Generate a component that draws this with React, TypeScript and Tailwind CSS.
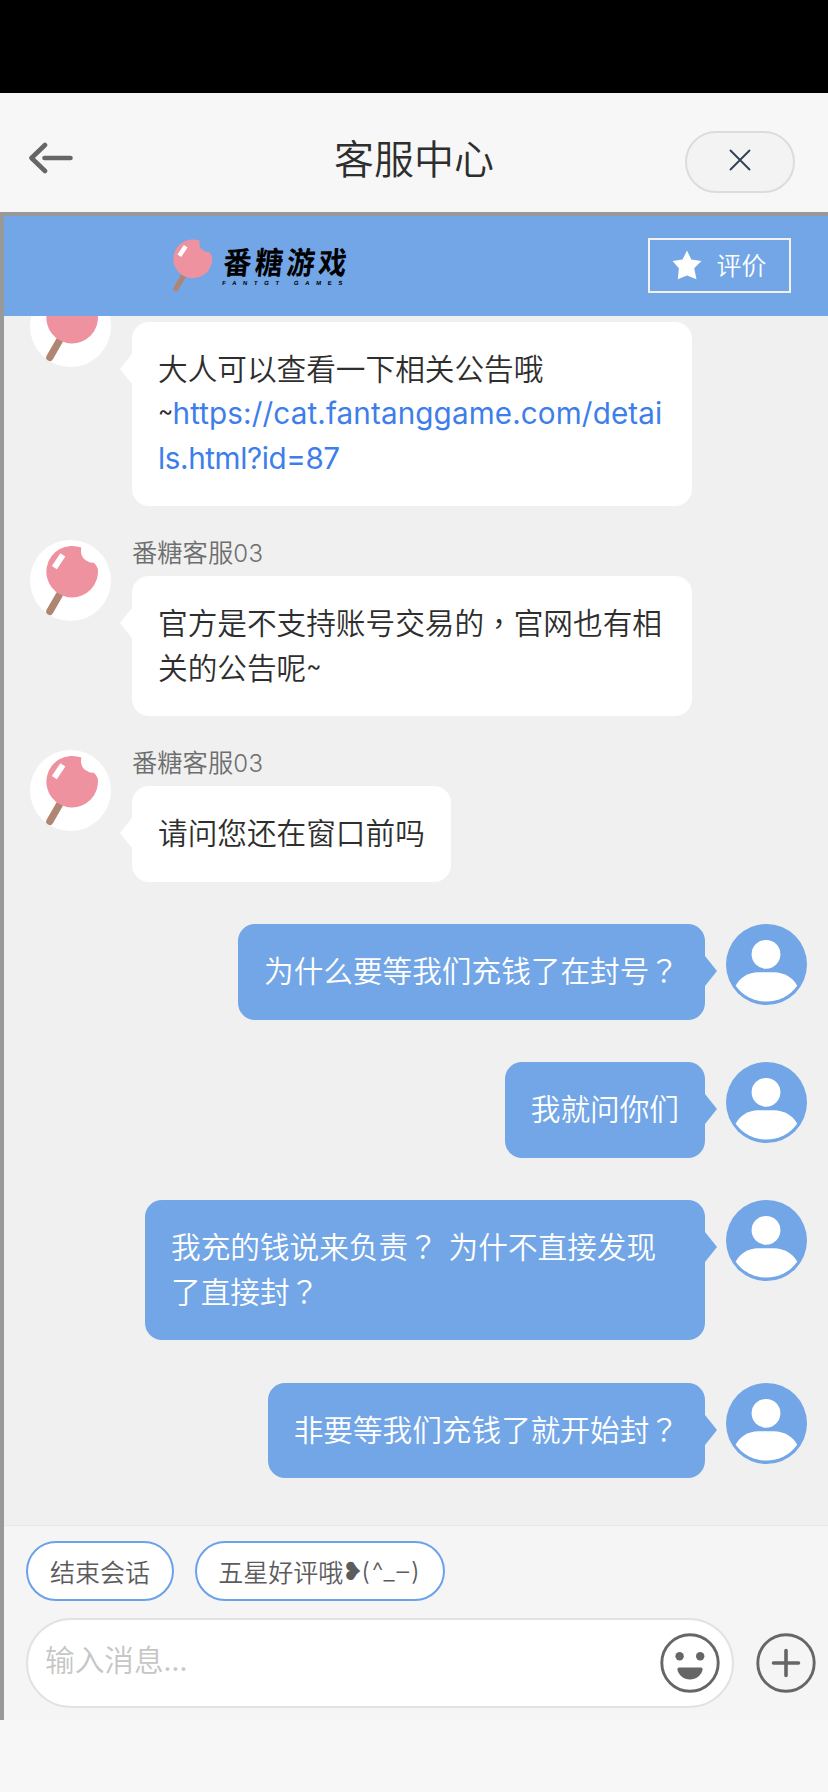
import type { ReactNode } from 'react';

interface Message {
  from: 'agent' | 'user';
  name?: string;
  wide?: boolean;
  gap: string;
  content: ReactNode;
}

// full-width punctuation sits in the middle of its cell
const P = ({ children }: { children: string }) => (
  <span className="font-['Noto_Sans_CJK_TC',sans-serif]">{children}</span>
);

const Tilde = () => (
  <span className="inline-block w-[14.5px] align-[5px] font-['Inter'] text-[23px] leading-none font-normal">~</span>
);

const agentName = '番糖客服';

const messages: Message[] = [
  {
    from: 'agent',
    wide: true,
    gap: 'mb-[34px]',
    content: (
      <>
        大人可以查看一下相关公告哦
        <br />
        <Tilde />
        <a href="#" className="font-['Inter'] leading-none font-normal text-[#3d7eea]">
          <span className="tracking-[0.12px]">https://cat.fantanggame.com/detai</span>
          <br />
          <span className="tracking-[-0.4px]">ls.html?id=87</span>
        </a>
      </>
    ),
  },
  {
    from: 'agent',
    name: agentName,
    wide: true,
    gap: 'mb-[34px]',
    content: (
      <>
        官方是不支持账号交易的<P>，</P>官网也有相
        <br />
        关的公告呢
        <Tilde />
      </>
    ),
  },
  { from: 'agent', name: agentName, gap: 'mb-[42.5px]', content: '请问您还在窗口前吗' },
  { from: 'user', gap: 'mb-[42.5px]', content: <>为什么要等我们充钱了在封号<P>？</P></> },
  { from: 'user', gap: 'mb-[42.5px]', content: '我就问你们' },
  {
    from: 'user',
    wide: true,
    gap: 'mb-[42.5px]',
    content: (
      <span className="[word-spacing:4.2px]">
        我充的钱说来负责<P>？</P> 为什不直接发现
        <br />
        了直接封<P>？</P>
      </span>
    ),
  },
  { from: 'user', gap: '', content: <>非要等我们充钱了就开始封<P>？</P></> },
];

function Candy({ className }: { className: string }) {
  return (
    <svg viewBox="0 0 81 81" className={className}>
      <path d="M29.5 54.5 19.8 71.4" stroke="#b18573" strokeWidth="7.2" strokeLinecap="round" />
      <path
        d="M51.4 7.6A25.8 25.8 0 1 0 67.8 28.8C66.8 26 65 23.2 62.8 22.6 60.8 22.8 58.8 22.4 57.4 21 52.8 19.5 49.8 14 51.4 7.6Z"
        fill="#ee929f"
      />
      <path d="M31.2 17.4 26 25.2" stroke="#fff" strokeWidth="6" strokeLinecap="square" />
    </svg>
  );
}

function UserAvatar() {
  return (
    <svg viewBox="0 0 81 81" className="size-[81px] shrink-0">
      <circle cx="40.5" cy="40.5" r="40.5" fill="#72a6e6" />
      <circle cx="40" cy="30.3" r="14.4" fill="#fff" />
      <path d="M9.6 61.8C14 53 23 48.2 32 48.2H48C57 48.2 67 53 71.2 61.8A38 38 0 0 1 9.6 61.8Z" fill="#fff" />
    </svg>
  );
}

function Bubble({ from, wide, children }: { from: Message['from']; wide?: boolean; children: ReactNode }) {
  const agent = from === 'agent';
  return (
    <div
      className={`relative rounded-[17px] px-[26px] pt-[24px] pb-[27px] text-[29.65px] leading-[44.5px] whitespace-nowrap ${
        wide ? 'w-[560px]' : ''
      } ${agent ? 'bg-white text-[#2e2e2e]' : 'bg-[#72a6e6] text-white'}`}
    >
      {children}
      <svg
        viewBox="0 0 12 30"
        className={`absolute top-[32px] h-[30px] w-[12px] ${agent ? '-left-[12px]' : '-right-[12px] rotate-180'}`}
      >
        <path d="M12 0V30L0 15Z" fill={agent ? '#fff' : '#72a6e6'} />
      </svg>
    </div>
  );
}

function MessageRow({ message }: { message: Message }) {
  if (message.from === 'user') {
    return (
      <div className={`flex items-start justify-end gap-[21px] pr-[21px] ${message.gap}`}>
        <Bubble from="user" wide={message.wide}>{message.content}</Bubble>
        <UserAvatar />
      </div>
    );
  }
  return (
    <div className={`flex items-start gap-[21px] pl-[26px] ${message.gap}`}>
      <div className="size-[81px] shrink-0 rounded-full bg-white">
        <Candy className="size-full" />
      </div>
      <div className="flex flex-col items-start">
        <div className="h-[36px] text-[25.3px] leading-[23px] text-[#6e6e6e]">
          {message.name && (
            <>
              {message.name}
              <span className="font-['Inter'] text-[24px] leading-none tracking-[0.4px]">03</span>
            </>
          )}
        </div>
        <Bubble from="agent" wide={message.wide}>{message.content}</Bubble>
      </div>
    </div>
  );
}

function Header() {
  return (
    <header className="grid h-[119px] grid-cols-[1fr_auto_1fr] items-center bg-[#f7f7f7] pr-[33px] pl-[33px]">
      <svg
        viewBox="0 0 46 32"
        className="-ml-[4px] mt-[10px] h-[32px] w-[46px]"
        fill="none"
        stroke="#666"
        strokeWidth="4.6"
        strokeLinecap="round"
        strokeLinejoin="round"
      >
        <path d="M16 3 2.5 16 16 29M15.5 16H41.5" />
      </svg>
      <h1 className="pt-[8px] text-[40px] leading-[56px] text-[#2e2e2e]">客服中心</h1>
      <button className="mt-[18px] flex h-[62px] w-[110px] items-center justify-center justify-self-end rounded-full border-2 border-[#dcdcdc] bg-[#f3f3f3]">
        <svg viewBox="0 0 22 22" className="mb-[3px] size-[22px]" stroke="#2f3d55" strokeWidth="1.8" strokeLinecap="round">
          <path d="M1.5 1.5 20.5 20.5M20.5 1.5 1.5 20.5" />
        </svg>
      </button>
    </header>
  );
}

function BrandBar() {
  return (
    <div className="flex h-[100px] shrink-0 items-center justify-between bg-[#72a6e6] pr-[37px] pb-[2px] pl-[157px]">
      <div className="flex items-center">
        <Candy className="size-[61px]" />
        <div className="flex -skew-x-6 flex-col pl-[1px] text-black">
          <span className="origin-bottom translate-y-[2px] scale-y-110 text-[28px] leading-[32px] font-bold tracking-[3.8px]">
            番糖游戏
          </span>
          <span className="pt-[3px] pl-[1px] font-['Liberation_Sans'] text-[6px] leading-[8px] font-bold tracking-[6.6px]">
            FANTGT GAMES
          </span>
        </div>
      </div>
      <button className="flex h-[55px] w-[143px] items-center justify-center gap-[14px] border-2 border-[#f2f2f2] text-[25px] text-white">
        <svg viewBox="0 0 30 30" className="size-[30px]" fill="#fff">
          <path d="M15 .5 19.3 9.6 29.5 11 22.2 18.2 24.5 29.2 15 25.5 5.8 29.2 6.9 18.2.5 11 10.5 9.6Z" />
        </svg>
        评价
      </button>
    </div>
  );
}

function Composer() {
  return (
    <footer className="h-[195px] shrink-0 border-t border-[#e8e8e8] bg-[#f5f5f5] pt-[15px] pl-[22px]">
      <div className="flex gap-[21px] text-[25px] text-[#5c5c5c]">
        <button className="h-[60px] w-[148px] rounded-full border-2 border-[#6aa2e9] bg-white pt-[1px]">结束会话</button>
        <button className="flex h-[60px] w-[250px] items-center justify-center rounded-full border-2 border-[#6aa2e9] bg-white pt-[1px]">
          五星好评哦
          <span className="flex w-[18px] justify-center font-['DejaVu_Sans'] text-[25px]">❥</span>
          <span className="font-['Inter'] text-[25px] tracking-[2px]">(^_–)</span>
        </button>
      </div>
      <div className="mt-[17px] flex items-center gap-[22px]">
        <div className="flex h-[90px] w-[708px] items-center justify-between rounded-full border-2 border-[#e1e2e6] bg-white pr-[12px] pl-[17px]">
          <span className="pb-[8px] text-[29.65px] text-[#c6c6c6]">输入消息...</span>
          <svg viewBox="0 0 60 60" className="size-[60px]" fill="#666">
            <circle cx="30" cy="30" r="28.2" fill="none" stroke="#666" strokeWidth="2.9" />
            <circle cx="19.6" cy="23.3" r="4.2" />
            <circle cx="40.2" cy="23.3" r="4.2" />
            <path d="M19 34.5H41Q42.8 34.5 42.6 36.5C41.5 42.5 36 46.5 30 46.5S18.5 42.5 17.4 36.5Q17.2 34.5 19 34.5Z" />
          </svg>
        </div>
        <svg viewBox="0 0 60 60" className="mb-[1px] size-[60px]" fill="none" stroke="#666">
          <circle cx="30" cy="30" r="28.2" strokeWidth="2.9" />
          <path d="M30 17.5V42.5M17.5 30H42.5" strokeWidth="3.6" strokeLinecap="round" />
        </svg>
      </div>
    </footer>
  );
}

export default function App() {
  return (
    <div className="h-[1792px] w-[828px] overflow-hidden bg-[#f7f7f7] font-['Noto_Sans_CJK_SC',sans-serif] font-[350]">
      <div className="h-[93px] bg-black" />
      <Header />
      <main className="flex h-[1508px] flex-col border-t-4 border-l-4 border-[#999]">
        <BrandBar />
        {/* list is scrolled to the newest message */}
        <section className="flex min-h-0 flex-1 flex-col justify-end overflow-hidden bg-[#f0f0f0] pb-[47px]">
          {messages.map((message, i) => (
            <MessageRow key={i} message={message} />
          ))}
        </section>
        <Composer />
      </main>
    </div>
  );
}
